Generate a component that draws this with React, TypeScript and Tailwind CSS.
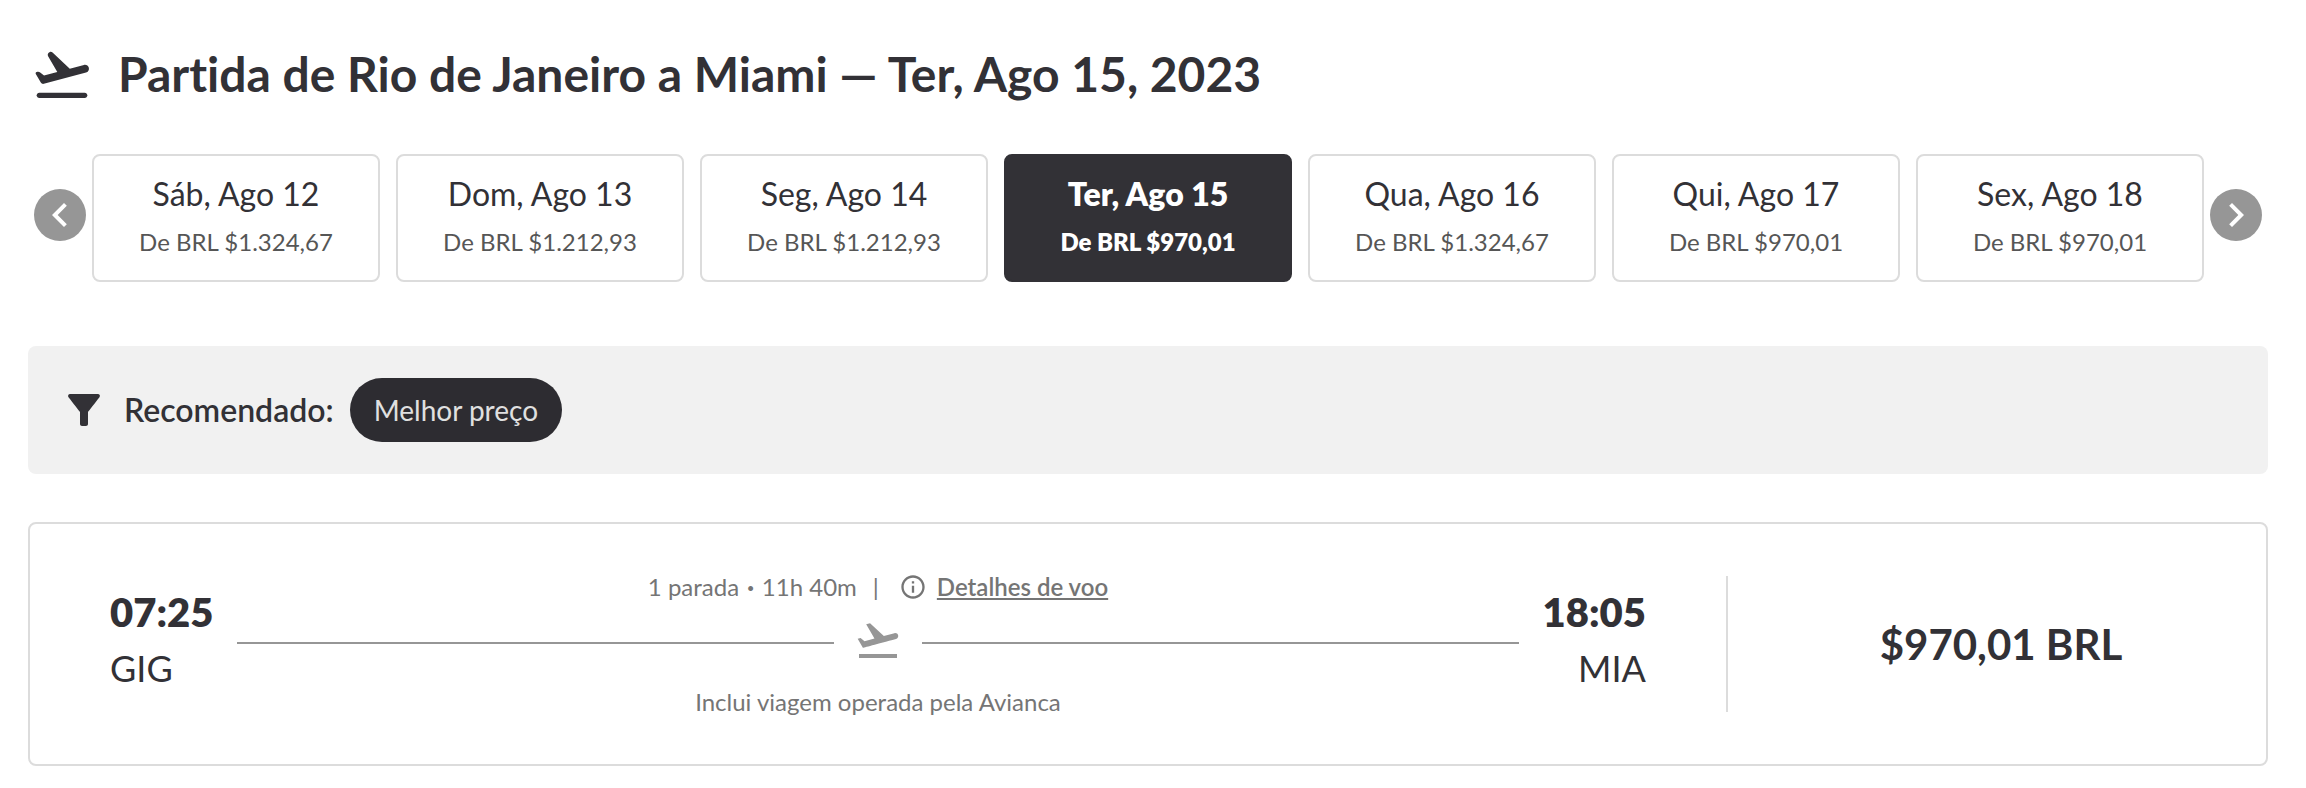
import React from 'react'
import { MdChevronLeft, MdChevronRight, MdFilterAlt, MdFlightTakeoff, MdInfoOutline } from 'react-icons/md'

const dates = [
  { day: 'Sáb, Ago 12', price: 'De BRL $1.324,67' },
  { day: 'Dom, Ago 13', price: 'De BRL $1.212,93' },
  { day: 'Seg, Ago 14', price: 'De BRL $1.212,93' },
  { day: 'Ter, Ago 15', price: 'De BRL $970,01', selected: true },
  { day: 'Qua, Ago 16', price: 'De BRL $1.324,67' },
  { day: 'Qui, Ago 17', price: 'De BRL $970,01' },
  { day: 'Sex, Ago 18', price: 'De BRL $970,01' },
]

const App = () => {
  return (
    <main className="pl-7 pr-[38px] pt-[42px] pb-5 bg-white text-[#323136] font-['Lato',sans-serif] [font-variant-ligatures:none]">
      <Header />
      <DateCarousel />
      <FilterBar />
      <FlightCard />
    </main>
  );
}

export default App

// rounded variant of the take off icon
const TakeoffIcon = () => (
  <svg viewBox="0 0 24 24" className="size-16 shrink-0" fill="currentColor" aria-hidden="true">
    <path d="M20.5 19h-17c-.55 0-1 .45-1 1s.45 1 1 1h17c.55 0 1-.45 1-1s-.45-1-1-1z" />
    <path d="M22.07 9.64c-.22-.8-1.04-1.27-1.84-1.06L14.92 10 8.46 3.98c-.27-.25-.65-.35-1.01-.25-.69.18-1.02.97-.66 1.59l3.44 5.93-4.97 1.33-1.57-1.24c-.25-.19-.57-.26-.88-.18l-.33.09c-.32.08-.47.45-.3.73l1.88 3.25c.23.39.69.58 1.12.47L21 11.48c.8-.22 1.28-1.04 1.07-1.84z" />
  </svg>
)

const Header = () => {
  return (
    <header className="flex items-center gap-6 pl-0.5">
      <TakeoffIcon />
      <h1 className="text-5xl leading-16 font-bold">
        Partida de Rio de Janeiro a Miami — Ter, Ago 15, 2023
      </h1>
    </header>
  );
}

const DateCarousel = () => {
  return (
    <section className="flex items-center gap-1.5 px-1.5 mt-12">
      <button type="button" aria-label="Anterior" className="flex items-center justify-center size-13 mb-1.5 shrink-0 rounded-full bg-[#969696] text-white">
        <MdChevronLeft className="size-12" />
      </button>
      <div className="flex flex-1 gap-4">
        {dates.map((date) => (
          <DateCard key={date.day} {...date} />
        ))}
      </div>
      <button type="button" aria-label="Próximo" className="flex items-center justify-center size-13 mb-1.5 shrink-0 rounded-full bg-[#969696] text-white">
        <MdChevronRight className="size-12" />
      </button>
    </section>
  );
}

const DateCard = ({ day, price, selected }: { day: string; price: string; selected?: boolean }) => {
  return (
    <button
      type="button"
      className={`flex flex-1 flex-col items-center gap-3 pt-[18px] pb-[22px] rounded-lg border-2 ${
        selected ? 'bg-[#323136] border-[#323136] text-white font-extrabold' : 'bg-white border-[#dcdcdc]'
      }`}
    >
      <span className="text-[32px] leading-10">{day}</span>
      <span className={selected ? 'text-2xl leading-8' : 'text-2xl leading-8 text-[#565656]'}>{price}</span>
    </button>
  );
}

const FilterBar = () => {
  return (
    <section className="flex items-center gap-4 mt-16 p-8 rounded-lg bg-[#f1f1f1]">
      <MdFilterAlt className="size-12" />
      <span className="text-[32px] leading-10 font-semibold">Recomendado:</span>
      <button type="button" className="px-6 h-16 rounded-full bg-[#2d2c31] text-[28px] text-[#e0e0e0]">
        Melhor preço
      </button>
    </section>
  );
}

const FlightCard = () => {
  return (
    <article className="flex items-center mt-12 rounded-lg border-2 border-[#dcdcdc]">
      <div className="flex flex-1 items-start gap-6 px-20 pt-[47px] pb-[46px]">
        <div className="pt-[17px]">
          <p className="text-[40px] leading-12 font-extrabold">07:25</p>
          <p className="mt-2 text-4xl leading-12">GIG</p>
        </div>
        <div className="flex-1 text-2xl leading-8 text-[#757575]">
          <div className="flex items-center justify-center">
            <span>1 parada</span>
            <span className="mx-2 font-black">·</span>
            <span>11h 40m</span>
            <span className="ml-4 mr-5">|</span>
            <a href="#detalhes" className="flex items-center gap-2.5 font-semibold">
              <MdInfoOutline className="size-7" />
              <span className="underline">Detalhes de voo</span>
            </a>
          </div>
          <div className="flex items-center gap-5 mt-[13px] text-[#969696]">
            <div className="flex-1 h-0.5 mt-1.5 bg-[#969696]" />
            <MdFlightTakeoff className="size-12" />
            <div className="flex-1 h-0.5 mt-1.5 bg-[#969696]" />
          </div>
          <p className="mt-[22px] text-center">Inclui viagem operada pela Avianca</p>
        </div>
        <div className="pt-[17px] text-right">
          <p className="text-[40px] leading-12 font-extrabold">18:05</p>
          <p className="mt-2 text-4xl leading-12">MIA</p>
        </div>
      </div>
      <div className="flex items-center justify-center w-[540px] h-34 pl-2 border-l-2 border-[#dcdcdc]">
        <p className="text-[42px] leading-12 font-bold">$970,01 BRL</p>
      </div>
    </article>
  );
}
